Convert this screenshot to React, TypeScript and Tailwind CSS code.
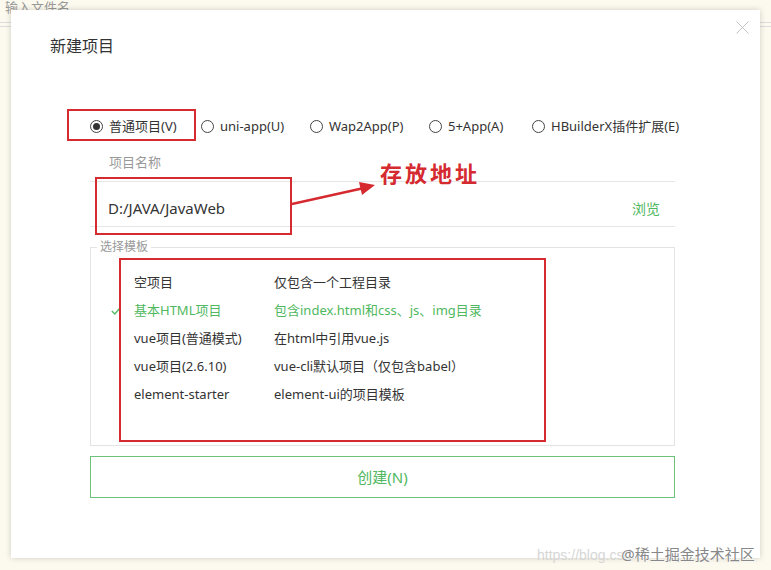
const templates = [
  { name: '空项目', desc: '仅包含一个工程目录', active: false },
  { name: '基本HTML项目', desc: '包含index.html和css、js、img目录', active: true },
  { name: 'vue项目(普通模式)', desc: '在html中引用vue.js', active: false },
  { name: 'vue项目(2.6.10)', desc: 'vue-cli默认项目（仅包含babel）', active: false },
  { name: 'element-starter', desc: 'element-ui的项目模板', active: false },
]

const projectTypes = [
  { label: '普通项目(V)', width: 'w-[111px]', checked: true },
  { label: 'uni-app(U)', width: 'w-[109px]', checked: false },
  { label: 'Wap2App(P)', width: 'w-[119px]', checked: false },
  { label: '5+App(A)', width: 'w-[103px]', checked: false },
  { label: 'HBuilderX插件扩展(E)', width: 'w-auto', checked: false },
]

function Radio({ checked }: { checked: boolean }) {
  return (
    <span className="flex h-[13px] w-[13px] items-center justify-center rounded-full border border-[#444]">
      {checked ? <span className="h-[7px] w-[7px] rounded-full bg-[#333]" /> : null}
    </span>
  )
}

function NewProjectDialog() {
  return (
    <div className="absolute left-[11px] top-[10px] flex h-[548px] w-[749px] flex-col bg-white shadow-[0_0_6px_rgba(0,0,0,0.18)]">
      <button className="absolute left-[725px] top-[11px] h-[13px] w-[13px]" type="button">
        <svg viewBox="0 0 13 13" className="h-[13px] w-[13px]">
          <path d="M0.5 0.5 L12.5 12.5 M12.5 0.5 L0.5 12.5" stroke="#c4c4c4" strokeWidth="1" fill="none" />
        </svg>
      </button>
      <h1 className="pl-[39px] pt-[26px] text-[16px] leading-[20px] text-[#333]">新建项目</h1>

      <div className="mt-[60px] flex h-[20px] items-center pl-[79px] text-[13px] text-[#333]">
        {projectTypes.map((t) => (
          <label key={t.label} className={`flex items-center gap-[6px] ${t.width}`}>
            <Radio checked={t.checked} />
            <span className="leading-[20px]">{t.label}</span>
          </label>
        ))}
      </div>

      <div className="ml-[79px] mr-[85px] mt-[16px] flex flex-col">
        <div className="h-[30px] border-b border-[#e6e6e6] pl-[19px] text-[13px] leading-[20px] text-[#999]">项目名称</div>
        <div className="flex h-[45px] items-center justify-between border-b border-[#e6e6e6] pl-[18px] pr-[15px] pt-[8px]">
          <span className="text-[15px] text-[#333]">D:/JAVA/JavaWeb</span>
          <span className="text-[14px] text-[#4fb860]">浏览</span>
        </div>

        <div className="relative mt-[20px] h-[199px] border border-[#e3e3e3] pt-[21px]">
          <span className="absolute -top-[8px] left-[6px] bg-white px-[3px] text-[12px] leading-[14px] text-[#999]">选择模板</span>
          {templates.map((t) => (
            <div
              key={t.name}
              className={`relative flex h-[28px] items-center pl-[43px] text-[13px] ${t.active ? 'text-[#4fb860]' : 'text-[#333]'}`}
            >
              {t.active ? (
                <svg viewBox="0 0 10 8" className="absolute left-[20px] top-[10px] h-[8px] w-[10px]">
                  <path d="M0.8 4 L3.8 7 L9.2 0.8" stroke="#4fb860" strokeWidth="1.3" fill="none" />
                </svg>
              ) : null}
              <span className="w-[140px]">{t.name}</span>
              <span>{t.desc}</span>
            </div>
          ))}
        </div>

        <button
          className="mt-[10px] h-[42px] border border-[#6cc27a] text-[15px] text-[#4fb860]"
          type="button"
        >
          创建(N)
        </button>
      </div>
    </div>
  )
}

export default function App() {
  return (
    <div
      className="relative h-[570px] w-[771px] overflow-hidden bg-[#fcf9ee]"
      style={{ fontFamily: '"Noto Sans", "Noto Sans CJK SC", sans-serif' }}
    >
      <div className="pl-[5px] text-[13px] leading-[14px] text-[#999]">输入文件名</div>
      <div className="mt-[8px] h-[5px] border-y border-[#ddd]" />

      <NewProjectDialog />

      {/* annotations */}
      <div className="absolute left-[67px] top-[109px] h-[32px] w-[129px] border-2 border-[#d42a30]" />
      <div className="absolute left-[95px] top-[177px] h-[58px] w-[197px] border-2 border-[#d42a30]" />
      <div className="absolute left-[119px] top-[258px] h-[184px] w-[427px] border-2 border-[#d42a30]" />
      <svg className="absolute left-0 top-0 h-[570px] w-[771px]" viewBox="0 0 771 570">
        <line x1="292" y1="204" x2="364" y2="188" stroke="#d42a30" strokeWidth="2.5" />
        <polygon points="375,185 359,182 362,195" fill="#d42a30" />
      </svg>
      <div
        className="absolute left-[380px] top-[157px] text-[22px] font-bold leading-[30px] tracking-[3px] text-[#d42a30]"
        style={{ fontFamily: '"Noto Sans CJK SC", serif' }}
      >
        存放地址
      </div>

      <div className="absolute left-[537px] top-[543px] flex items-baseline whitespace-nowrap">
        <span className="text-[14px] text-[#d6d6d6]" style={{ fontFamily: '"Liberation Sans", sans-serif' }}>
          https://blog.csd
        </span>
        <span className="-ml-[10px] text-[15px] text-[#888] [text-shadow:0_0_2px_#fff,0_0_2px_#fff]">@稀土掘金技术社区</span>
      </div>
    </div>
  )
}
